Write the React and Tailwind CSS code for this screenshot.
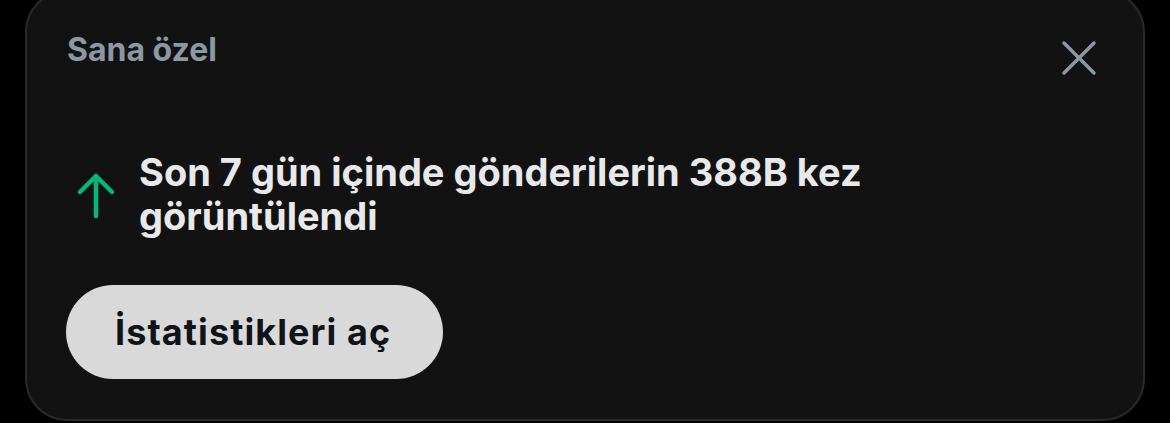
export default function App() {
  return (
    <div className="w-[1170px] h-[423px] bg-black overflow-hidden pl-[25px] font-['Inter',sans-serif]">
      <div className="w-[1120px] h-[431px] -mt-[10px] rounded-[42px] border-2 border-[#2a2a2a] bg-[#121212] flex flex-col pl-[40px] pr-[44px]">
        {/* header */}
        <div className="flex items-start justify-between pt-[42px]">
          <h3 className="text-[32px] leading-[32px] font-bold text-[#8b98a5]">Sana özel</h3>
          <button className="mt-[4px] text-[#8b98a5]" aria-label="Kapat">
            <svg width="40" height="40" viewBox="0 0 40 40" fill="none" stroke="currentColor" strokeWidth="3.5" strokeLinecap="round">
              <path d="M5 5l30 30M35 5L5 35" />
            </svg>
          </button>
        </div>

        {/* stat line */}
        <div className="flex items-start gap-[23px] mt-[72px] pl-[9px]">
          <svg className="mt-[21px] shrink-0 text-[#00ba7c]" width="40" height="48" viewBox="0 0 40 48" fill="none" stroke="currentColor" strokeWidth="4.5" strokeLinecap="round" strokeLinejoin="round">
            <path d="M20 45V5M4 21L20 5l16 16" />
          </svg>
          <p className="text-[38px] leading-[44px] font-bold text-[#e7e9ea] max-w-[760px]">
            Son 7 gün içinde gönderilerin 388B kez görüntülendi
          </p>
        </div>

        {/* action */}
        <div className="mt-[47px] -ml-px">
          <button className="h-[94px] w-[377px] rounded-full bg-[#d9d9d9] text-[36px] tracking-[0.03em] font-bold text-[#0f1419] text-left pl-[49px]">
            İstatistikleri aç
          </button>
        </div>
      </div>
    </div>
  );
}
